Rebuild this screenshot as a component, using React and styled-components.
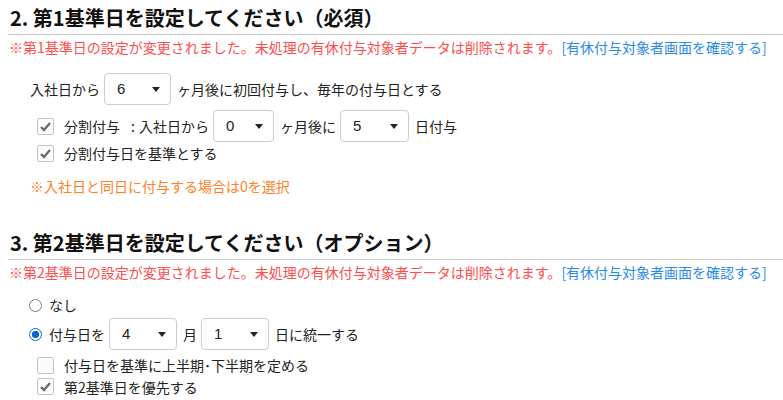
import React from 'react'
import styled, { createGlobalStyle } from 'styled-components'

const GlobalStyle = createGlobalStyle`
    body {
        margin: 0;
        background: #fff;
        font-family: "Noto Sans CJK JP", "Noto Sans", sans-serif;
        color: #222;
    }
`;

function Select({ value, width }) {
    return (
        <SelectBox $width={width}>
            <span>{value}</span>
            <Caret />
        </SelectBox>
    )
}

function Check({ checked, children }) {
    return (
        <CheckRow>
            <CheckBox>
                {checked && (
                    <svg width="13" height="11" viewBox="0 0 13 11">
                        <path d="M2 6 L5 9 L11 2" fill="none" stroke="#6b6b6b" strokeWidth="2.4" />
                    </svg>
                )}
            </CheckBox>
            {children}
        </CheckRow>
    )
}

function App() {
    return (
        <Page>
            <GlobalStyle />
            <Section>
                <Heading>2. 第1基準日を設定してください（必須）</Heading>
                <Warning>
                    ※第1基準日の設定が変更されました。未処理の有休付与対象者データは削除されます。
                    <Link>[有休付与対象者画面を確認する]</Link>
                </Warning>
                <Body>
                    <Row>
                        入社日から
                        <Select value="6" width={67} />
                        ヶ月後に初回付与し、毎年の付与日とする
                    </Row>
                    <Check checked>
                        分割付与<Colon>:</Colon>入社日から
                        <Select value="0" width={61} />
                        ヶ月後に
                        <Select value="5" width={69} />
                        日付与
                    </Check>
                    <Check checked>分割付与日を基準とする</Check>
                    <Note>※入社日と同日に付与する場合は0を選択</Note>
                </Body>
            </Section>

            <Section $second>
                <Heading>3. 第2基準日を設定してください（オプション）</Heading>
                <Warning>
                    ※第2基準日の設定が変更されました。未処理の有休付与対象者データは削除されます。
                    <Link>[有休付与対象者画面を確認する]</Link>
                </Warning>
                <Body $second>
                    <RadioRow>
                        <Radio />
                        なし
                    </RadioRow>
                    <RadioRow $tall>
                        <Radio $checked />
                        付与日を
                        <Select value="4" width={68} />
                        月
                        <Select value="1" width={68} />
                        日に統一する
                    </RadioRow>
                    <Check>付与日を基準に上半期･下半期を定める</Check>
                    <Check checked>第2基準日を優先する</Check>
                </Body>
            </Section>
        </Page>
    )
}
export default App;

const Page = styled.div`
    width: 783px;
    height: 400px;
    overflow: hidden;
`;

const Section = styled.section`
    padding-left: 8px;
    margin-top: ${p => (p.$second ? '29px' : '0')};
`;

const Heading = styled.h2`
    margin: 0;
    padding: 4px 0 2px 2px;
    font-size: 20px;
    line-height: 28px;
    font-weight: 700;
    color: #111;
    border-bottom: 1px solid #cccccc;
`;

const Warning = styled.div`
    margin-top: 2px;
    padding-left: 1px;
    font-size: 14px;
    line-height: 20px;
    color: #ff4d4d;
    white-space: nowrap;
`;

const Link = styled.span`
    color: #2b8ae8;
`;

const Body = styled.div`
    margin-top: ${p => (p.$second ? '12px' : '16px')};
    padding-left: 22px;
    font-size: 14px;
`;

const Row = styled.div`
    display: flex;
    align-items: center;
    height: 32px;
    line-height: 20px;
    white-space: nowrap;
`;

const Colon = styled.span`
    padding: 0 4px 0 11px;
`;

const CheckRow = styled.div`
    display: flex;
    align-items: center;
    min-height: 21px;
    margin-left: 7px;
    line-height: 20px;
    white-space: nowrap;
    &:nth-child(2) {
        height: 32px;
        margin-top: 5px;
    }
    &:nth-child(3) {
        height: 22px;
    }
`;

const CheckBox = styled.span`
    display: inline-flex;
    align-items: center;
    justify-content: center;
    box-sizing: border-box;
    width: 17px;
    height: 17px;
    margin-right: 10px;
    border: 1px solid #c4c4c4;
    border-radius: 2px;
    background: #fbfbfb;
`;

const RadioRow = styled.div`
    display: flex;
    align-items: center;
    height: ${p => (p.$tall ? '32px' : '22px')};
    margin-top: ${p => (p.$tall ? '2px' : '0')};
    margin-left: -1px;
    margin-bottom: ${p => (p.$tall ? '4px' : '0')};
    line-height: 20px;
    white-space: nowrap;
`;

const Radio = styled.span`
    box-sizing: border-box;
    width: 13px;
    height: 13px;
    margin-right: 7px;
    border-radius: 50%;
    border: ${p => (p.$checked ? '1.5px solid #0a66d2' : '1px solid #7a7a7a')};
    background: ${p => (p.$checked ? 'radial-gradient(circle, #0a66d2 0 3.4px, #fff 3.9px)' : '#fff')};
`;

const SelectBox = styled.span`
    display: inline-flex;
    align-items: center;
    justify-content: space-between;
    box-sizing: border-box;
    width: ${p => p.$width}px;
    height: 32px;
    margin: 0 6px 0 4px;
    padding: 0 10px 0 12px;
    border: 1px solid #cccccc;
    border-radius: 4px;
    background: #fff;
    font-family: "Liberation Sans", Arial, sans-serif;
    font-size: 15px;
    color: #222;
`;

const Caret = styled.span`
    width: 0;
    height: 0;
    border-left: 4px solid transparent;
    border-right: 4px solid transparent;
    border-top: 5px solid #222;
`;

const Note = styled.div`
    margin-top: 12px;
    line-height: 20px;
    color: #ff7f24;
`;
